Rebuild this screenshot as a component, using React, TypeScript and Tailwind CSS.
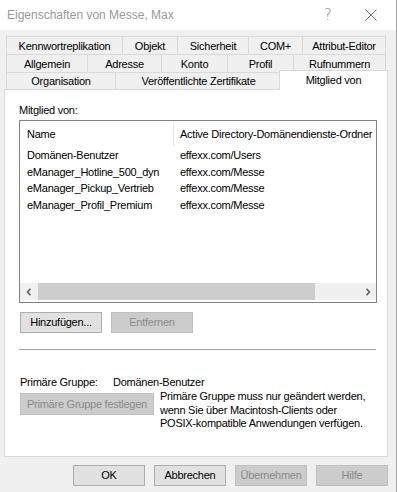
import React from 'react';

// one tab of the property sheet
interface TabProps {
  label: string;
  width: number;
  last?: boolean;
}

const tabWidths: Record<number, string> = {
  116: 'w-[116px]',
  55: 'w-[55px]',
  71: 'w-[71px]',
  54: 'w-[54px]',
  84: 'w-[84px]',
  81: 'w-[81px]',
  74: 'w-[74px]',
  66: 'w-[66px]',
  93: 'w-[93px]',
  109: 'w-[109px]',
  166: 'w-[166px]',
};

const Tab: React.FC<TabProps> = ({ label, width, last = false }) => {
  return (
    <div
      className={`${tabWidths[width]} h-full flex items-center justify-center pt-px border-t border-l border-[#d9d9d9] bg-[#f0f0f0] leading-[13px] ${last ? 'border-r' : ''}`}
    >
      {label}
    </div>
  );
};

interface WinButtonProps {
  label: string;
  disabled?: boolean;
  className?: string;
}

const WinButton: React.FC<WinButtonProps> = ({ label, disabled = false, className = '' }) => {
  return (
    <div
      className={`flex items-center justify-center border leading-[13px] ${
        disabled ? 'bg-[#cccccc] border-[#bfbfbf] text-[#8a8a8a]' : 'bg-[#e1e1e1] border-[#adadad] text-black'
      } ${className}`}
    >
      {label}
    </div>
  );
};

const ChevronLeft = () => (
  <svg width="6" height="8" viewBox="0 0 6 8">
    <path d="M4.5 0.8 L1.5 4 L4.5 7.2" fill="none" stroke="#606060" strokeWidth="1.6" />
  </svg>
);

const ChevronRight = () => (
  <svg width="6" height="8" viewBox="0 0 6 8">
    <path d="M1.5 0.8 L4.5 4 L1.5 7.2" fill="none" stroke="#606060" strokeWidth="1.6" />
  </svg>
);

const groups = [
  { name: 'Domänen-Benutzer', folder: 'effexx.com/Users' },
  { name: 'eManager_Hotline_500_dyn', folder: 'effexx.com/Messe' },
  { name: 'eManager_Pickup_Vertrieb', folder: 'effexx.com/Messe' },
  { name: 'eManager_Profil_Premium', folder: 'effexx.com/Messe' },
];

export default function App() {
  return (
    <div className="w-[397px] h-[492px] bg-[#f0f0f0] border-r border-[#a6a6a6] flex flex-col overflow-hidden font-['Liberation_Sans',Arial,sans-serif] text-[11px] tracking-[-0.25px] text-black">
      {/* title bar */}
      <div className="h-[30px] bg-white flex items-center shrink-0">
        <span className="pl-[7px] text-[12px] tracking-normal text-[#999999] leading-[16px]">Eigenschaften von Messe, Max</span>
        <span className="ml-auto mr-[33px] text-[15px] tracking-normal text-[#8a8a8a] font-['DejaVu_Sans',sans-serif] font-light leading-[16px]">?</span>
        <svg width="12" height="12" viewBox="0 0 12 12" className="mr-[19px]">
          <path d="M0.5 0.5 L11.5 11.5 M11.5 0.5 L0.5 11.5" stroke="#777777" strokeWidth="1" />
        </svg>
      </div>

      {/* tab rows */}
      <div className="mt-[6px] ml-[6px] w-[380px] flex flex-col shrink-0">
        <div className="flex h-[18px]">
          <Tab label="Kennwortreplikation" width={116} />
          <Tab label="Objekt" width={55} />
          <Tab label="Sicherheit" width={71} />
          <Tab label="COM+" width={54} />
          <Tab label="Attribut-Editor" width={84} last />
        </div>
        <div className="flex h-[18px]">
          <Tab label="Allgemein" width={81} />
          <Tab label="Adresse" width={74} />
          <Tab label="Konto" width={66} />
          <Tab label="Profil" width={66} />
          <Tab label="Rufnummern" width={93} last />
        </div>
        <div className="flex h-[17px] items-end">
          <Tab label="Organisation" width={109} />
          <Tab label="Veröffentlichte Zertifikate" width={166} />
          <div className="relative z-10 -ml-[2px] -mr-[2px] -mb-px w-[109px] h-[20px] bg-white border-t border-l border-r border-[#d9d9d9] flex justify-center pt-[3px] leading-[13px]">
            Mitglied von
          </div>
        </div>
      </div>

      {/* page */}
      <div className="ml-[4px] w-[384px] h-[368px] bg-white border border-[#d9d9d9] flex flex-col pl-[14px] shrink-0">
        <div className="mt-[14px] leading-[13px]">Mitglied von:</div>

        <div className="mt-[3px] w-[358px] h-[183px] border border-[#828282] flex flex-col">
          <div className="h-[26px] flex items-center shrink-0">
            <div className="w-[153px] pl-[7px] leading-[13px]">Name</div>
            <div className="w-px h-[23px] bg-[#e5e5e5]" />
            <div className="flex-1 pl-[6px] whitespace-nowrap overflow-hidden leading-[13px]">Active Directory-Domänendienste-Ordner</div>
          </div>
          <div className="flex-1 flex flex-col">
            {groups.map((g) => (
              <div key={g.name} className="h-[16.7px] flex items-center leading-[13px]">
                <div className="w-[154px] pl-[7px] whitespace-nowrap">{g.name}</div>
                <div className="pl-[6px] whitespace-nowrap">{g.folder}</div>
              </div>
            ))}
          </div>
          <div className="h-[17px] mb-[2px] bg-[#f0f0f0] flex items-stretch shrink-0">
            <div className="w-[17px] flex items-center justify-center">
              <ChevronLeft />
            </div>
            <div className="ml-px w-[277px] bg-[#cdcdcd]" />
            <div className="flex-1" />
            <div className="w-[17px] flex items-center justify-center">
              <ChevronRight />
            </div>
          </div>
        </div>

        <div className="mt-[9px] flex gap-[9px] h-[21px] pl-px">
          <WinButton label="Hinzufügen..." className="w-[82px]" />
          <WinButton label="Entfernen" disabled className="w-[82px]" />
        </div>

        <div className="mt-[16px] w-[357px] h-px bg-[#a0a0a0]" />

        <div className="mt-[26px] flex leading-[13px] pl-px">
          <span className="w-[93px]">Primäre Gruppe:</span>
          <span>Domänen-Benutzer</span>
        </div>

        <div className="mt-[1px] flex items-start pl-px">
          <WinButton label="Primäre Gruppe festlegen" disabled className="mt-[3px] w-[134px] h-[22px]" />
          <div className="ml-[6px] leading-[13.5px]">
            Primäre Gruppe muss nur geändert werden,
            <br />
            wenn Sie über Macintosh-Clients oder
            <br />
            POSIX-kompatible Anwendungen verfügen.
          </div>
        </div>
      </div>

      {/* dialog buttons */}
      <div className="mt-[8px] flex justify-end gap-[9px] pr-[8px] h-[21px] shrink-0">
        <WinButton label="OK" className="w-[72px]" />
        <WinButton label="Abbrechen" className="w-[72px]" />
        <WinButton label="Übernehmen" disabled className="w-[72px]" />
        <WinButton label="Hilfe" disabled className="w-[72px]" />
      </div>
    </div>
  );
}
